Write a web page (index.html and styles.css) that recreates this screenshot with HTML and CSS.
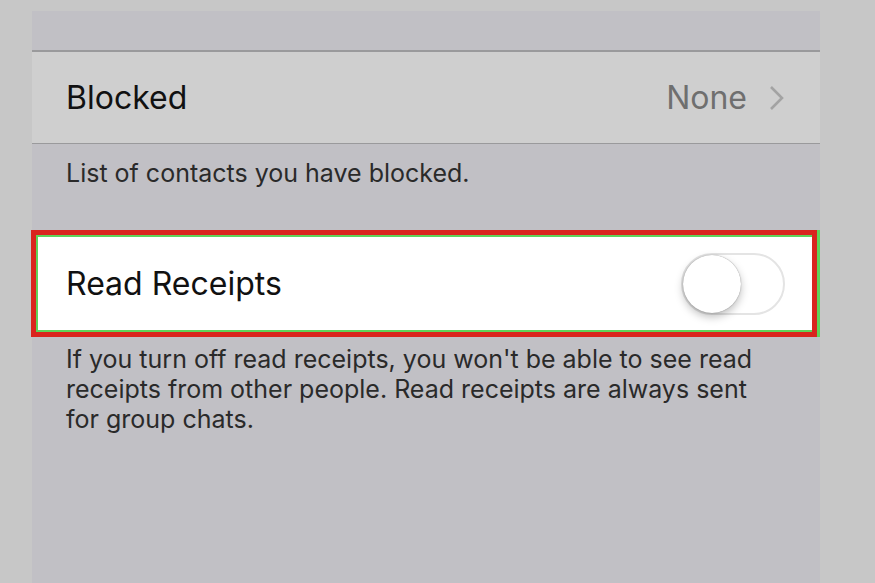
FILE: index.html
```
<!DOCTYPE html>
<html lang="en">
<head>
    <meta charset="UTF-8">
    <meta name="viewport" content="width=device-width, initial-scale=1.0">
    <title>Privacy</title>
    <link rel="stylesheet" href="styles.css">
</head>
<body>

<div class="screen">
    <div class="top-space"></div>

    <div class="group">
        <div class="row blocked-row">
            <span class="row-title">Blocked</span>
            <span class="row-value">None</span>
            <svg class="chevron" width="15" height="26" viewBox="0 0 15 26">
                <path d="M2 2 L13 13 L2 24" fill="none" stroke="#a3a3a3" stroke-width="2.6"/>
            </svg>
        </div>
    </div>
    <p class="footer-text first">List of contacts you have blocked.</p>

    <div class="highlight">
        <div class="row receipts-row">
            <span class="row-title">Read Receipts</span>
            <div class="toggle">
                <div class="knob"></div>
            </div>
        </div>
    </div>
    <p class="footer-text">If you turn off read receipts, you won't be able to see read receipts from other people. Read receipts are always sent for group chats.</p>
</div>

</body>
</html>
```

FILE: styles.css
```
body {
    margin: 0;
    background: #c7c7c7;
    font-family: "Inter", "Liberation Sans", sans-serif;
    height: 583px;
    overflow: hidden;
}

.screen {
    width: 788px;
    height: 572px;
    margin: 11px 0 0 32px;
    background: #c1c0c5;
}

.top-space {
    height: 39px;
}

.group {
    border-top: 2px solid #9a9a9c;
    border-bottom: 1px solid #9a9a9c;
    background: #cfcfcf;
}

.row {
    display: flex;
    align-items: center;
    padding: 0 34px;
}

.blocked-row {
    height: 91px;
}

.row-title {
    flex: 1;
    font-size: 32px;
    color: #111;
}

.row-value {
    font-size: 32px;
    color: #6f6f6f;
    margin-right: 22px;
}

.chevron {
    margin-right: 2px;
}

.footer-text {
    margin: 0;
    padding: 7px 34px 0;
    font-size: 25px;
    line-height: 30px;
    color: #2a2a2a;
}

.footer-text.first {
    height: 72px;
    padding-top: 14px;
}

.highlight {
    margin-left: -1px;
    width: 776px;
    border: 5px solid #d9251e;
    box-shadow: 3px 0 0 #5fd35a;
}

.receipts-row {
    height: 93px;
    background: #fff;
    border: 2px solid #5fd35a;
    border-right: none;
    padding-left: 28px;
    padding-right: 27px;
}

.toggle {
    width: 100px;
    height: 58px;
    border: 2px solid #e4e4e4;
    border-radius: 31px;
    background: #fff;
    position: relative;
}

.knob {
    position: absolute;
    top: 0;
    left: 0;
    width: 58px;
    height: 58px;
    border-radius: 50%;
    background: #fff;
    box-shadow: 0 4px 8px rgba(0, 0, 0, 0.25), 0 0 1px rgba(0, 0, 0, 0.5);
}
```
